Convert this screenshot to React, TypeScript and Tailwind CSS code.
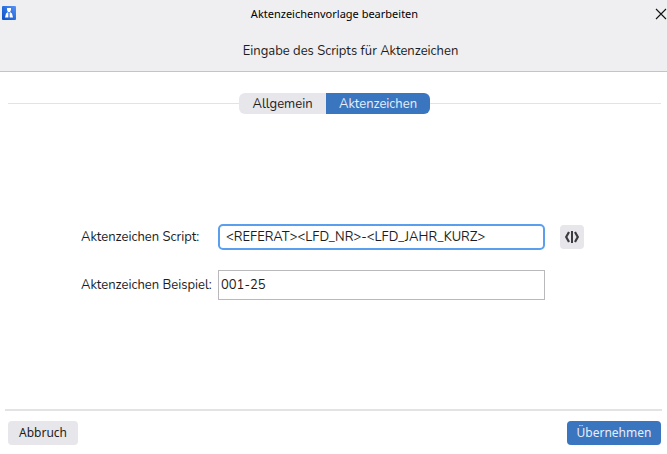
import { FC, useState } from "react";

type Tab = { id: string; title: string };

const tabs: Tab[] = [
  { id: "general", title: "Allgemein" },
  { id: "reference", title: "Aktenzeichen" },
];

const AppIcon: FC = () => {
  return (
    <svg className="h-[14px] w-[14px]" viewBox="0 0 14 14" aria-hidden="true">
      <defs>
        <linearGradient id="appIcon" x1="1" y1="0" x2="0" y2="1">
          <stop offset="0" stopColor="#5b95f5" />
          <stop offset="0.5" stopColor="#2a6fe0" />
          <stop offset="1" stopColor="#0b4fc0" />
        </linearGradient>
      </defs>
      <rect width="14" height="14" rx="1" fill="url(#appIcon)" />
      <path d="M5 2h4v1.500L8.600 5L8 6H6L5.400 5L5 3.500z" fill="#fff" />
      <path d="M6 6L4 7.500L3 11.500h3.400V7zM8 6l2 1.500l1 4H7.600V7z" fill="#fff" />
    </svg>
  );
};

const CloseIcon: FC = () => {
  return (
    <svg className="h-[14px] w-3" viewBox="0 0 12 14" aria-hidden="true">
      <path d="M1 2l10 10M11 2L1 12" stroke="#111" strokeWidth="1.1" />
    </svg>
  );
};

const ScriptIcon: FC = () => {
  return (
    <svg className="h-3 w-4" viewBox="0 0 16 12" fill="none" aria-hidden="true">
      <path
        d="M5 1L2.200 6L5 11M11 1l2.800 5L11 11"
        stroke="#3c3c3f"
        strokeWidth="2.2"
      />
      <path d="M8 0v12" stroke="#3c3c3f" strokeWidth="2" />
    </svg>
  );
};

const App: FC = () => {
  const [active, setActive] = useState("reference");
  const [script, setScript] = useState("<REFERAT><LFD_NR>-<LFD_JAHR_KURZ>");

  return (
    <div className="flex min-h-screen flex-col bg-white font-['Nunito','Lato',sans-serif] text-[13px] leading-5 text-[#1c1c1e]">
      <header className="border-b border-[#c4c4c6] bg-[#efeff1] pb-[10px] pt-[6px]">
        <div className="grid grid-cols-[20px_1fr_20px] items-start pl-[2px]">
          <AppIcon />
          <h1 className="text-center font-['Noto_Sans',sans-serif] text-[11px] leading-4 text-black">
            Aktenzeichenvorlage bearbeiten
          </h1>
          <button
            type="button"
            aria-label="Schließen"
            className="justify-self-end pt-px"
          >
            <CloseIcon />
          </button>
        </div>
        <p className="mt-[19px] pl-[34px] text-center">
          Eingabe des Scripts für Aktenzeichen
        </p>
      </header>

      <div className="mt-[21px] flex items-center pl-2 pr-[6px]">
        <div className="h-px flex-1 bg-[#e3e3e5]" />
        <div className="flex overflow-hidden rounded-md" role="tablist">
          {tabs.map((tab) => {
            return (
              <button
                key={tab.id}
                type="button"
                role="tab"
                aria-selected={tab.id === active}
                onClick={() => setActive(tab.id)}
                className={
                  tab.id === active
                    ? "h-[21px] w-[104px] bg-[#3a75c0] text-[#e8eef7]"
                    : "h-[21px] w-[87px] bg-[#e6e6eb]"
                }
              >
                {tab.title}
              </button>
            );
          })}
        </div>
        <div className="h-px flex-1 bg-[#e3e3e5]" />
      </div>

      <main className="flex flex-1 flex-col justify-center gap-5 pl-[81px] pr-[83px]">
        <div className="grid grid-cols-[137px_1fr_39px] items-center">
          <label htmlFor="script">Aktenzeichen Script:</label>
          <input
            id="script"
            type="text"
            value={script}
            onChange={(e) => setScript(e.target.value)}
            className="h-[26px] w-full rounded-[5px] border-2 border-[#5a9fee] px-[6px] outline-none"
          />
          <button
            type="button"
            aria-label="Platzhalter einfügen"
            className="flex h-6 w-6 items-center justify-center justify-self-end rounded bg-[#e6e6eb]"
          >
            <ScriptIcon />
          </button>
        </div>
        <div className="grid grid-cols-[137px_1fr_39px] items-center">
          <label htmlFor="example">Aktenzeichen Beispiel:</label>
          <input
            id="example"
            type="text"
            readOnly
            value="001-25"
            className="h-[30px] w-full border border-[#b9b9bb] px-[2px] outline-none"
          />
        </div>
      </main>

      <footer className="mx-[5px] border-t-2 border-[#e3e3e5] pb-[9px] pt-[10px] font-['Noto_Sans',sans-serif] text-[12px]">
        <div className="flex justify-between pl-[3px] pr-px">
          <button type="button" className="h-6 w-[70px] rounded bg-[#e6e6eb]">
            Abbruch
          </button>
          <button
            type="button"
            className="h-6 w-[94px] rounded bg-[#3a75c0] text-[#e8eef7]"
          >
            Übernehmen
          </button>
        </div>
      </footer>
    </div>
  );
};

export default App;
